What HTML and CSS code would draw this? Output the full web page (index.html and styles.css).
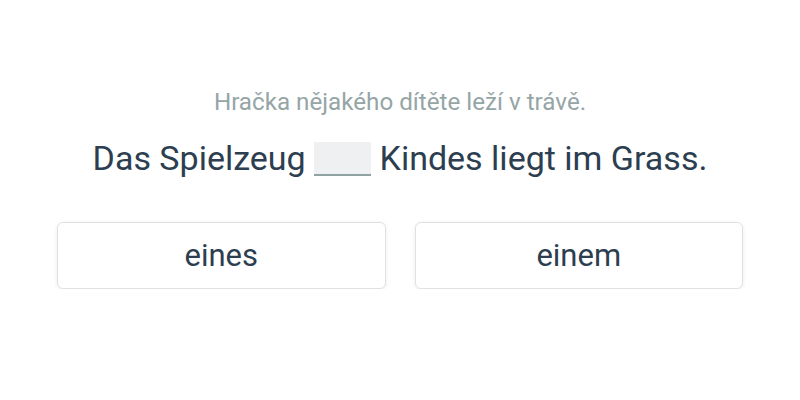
FILE: index.html
```html
<!DOCTYPE html>
<html>
<head>
<meta charset="utf-8">
<link rel="stylesheet" href="styles.css">
</head>
<body>
<main class="exercise">
  <p class="hint">Hračka nějakého dítěte leží v trávě.</p>
  <p class="sentence">Das Spielzeug <span class="blank"></span> Kindes liegt im Grass.</p>
  <div class="options">
    <button class="option">eines</button>
    <button class="option">einem</button>
  </div>
</main>
</body>
</html>
```

FILE: styles.css
```css
html, body {
  margin: 0;
  padding: 0;
  background: #ffffff;
}
body {
  font-family: Roboto, "Noto Sans", sans-serif;
  color: #2c3e50;
}
.exercise {
  width: 686px;
  margin: 0 auto;
  padding-top: 86px;
  display: flex;
  flex-direction: column;
  align-items: stretch;
}
.hint {
  margin: 0;
  text-align: center;
  font-size: 24.2px;
  line-height: 32px;
  color: #95a5a6;
}
.sentence {
  margin: 17px 0 0;
  text-align: center;
  font-size: 34px;
  line-height: 46px;
  color: #2c3e50;
}
.blank {
  display: inline-block;
  width: 57px;
  height: 32px;
  background: #eef0f2;
  border-bottom: 2px solid #8fa3a3;
  vertical-align: -6px;
}
.options {
  margin-top: 41px;
  display: grid;
  grid-template-columns: 1fr 1fr;
  gap: 29px;
}
.option {
  height: 67px;
  background: #ffffff;
  border: 1px solid #dfe2e5;
  border-radius: 6px;
  box-shadow: 0 1px 4px rgba(0,0,0,0.08);
  font-family: Roboto, "Noto Sans", sans-serif;
  font-size: 31px;
  color: #2c3e50;
  padding: 0;
}
```
